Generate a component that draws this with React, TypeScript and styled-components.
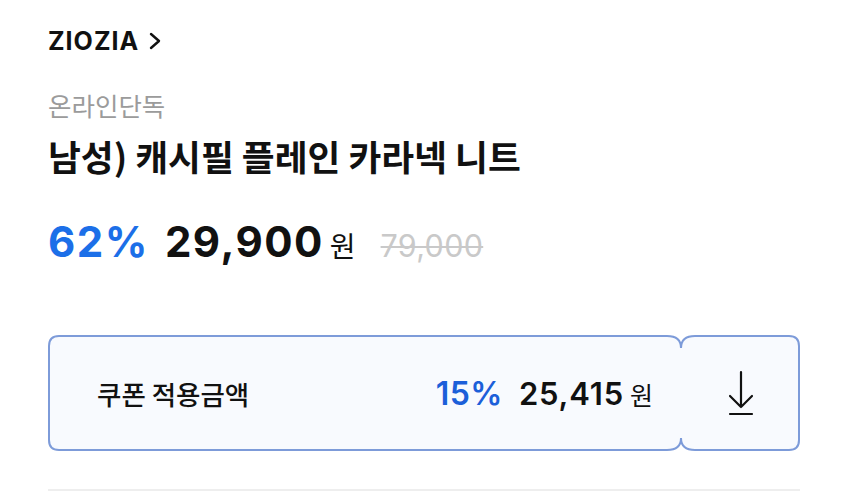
import React from "react";
import styled, { createGlobalStyle } from "styled-components";

const Global = createGlobalStyle`
  html, body { margin: 0; padding: 0; background: #ffffff; }
  body { font-family: "Inter", "Noto Sans CJK KR", sans-serif; color: #111; }
`;

const Page = styled.div`
  width: 849px;
  height: 493px;
  box-sizing: border-box;
  padding: 26px 49px 0 48px;
  display: flex;
  flex-direction: column;
  overflow: hidden;
`;

const BrandRow = styled.div`
  display: flex;
  align-items: center;
  gap: 10px;
  height: 30px;
  font-size: 25px;
  font-weight: 700;
  line-height: 30px;
  color: #111;
  letter-spacing: 1px;
`;

const Tag = styled.div`
  margin-top: 34px;
  height: 30px;
  line-height: 30px;
  font-family: "Noto Sans CJK KR", sans-serif;
  font-size: 25.5px;
  color: #9b9b9b;
`;

const Title = styled.h1`
  margin: 16px 0 0;
  height: 40px;
  line-height: 40px;
  font-family: "Noto Sans CJK KR", sans-serif;
  font-size: 35.7px;
  font-weight: 700;
  color: #111;
`;

const PriceRow = styled.div`
  margin-top: 42px;
  height: 48px;
  line-height: 48px;
  display: flex;
  align-items: baseline;
`;

const Discount = styled.span<{ $size: number }>`
  font-size: ${(p) => p.$size}px;
  font-weight: 700;
  letter-spacing: 1.5px;
  color: #1c6fe8;
`;

const Amount = styled.span<{ $size: number; $weight: number; $spacing: number }>`
  font-size: ${(p) => p.$size}px;
  font-weight: ${(p) => p.$weight};
  letter-spacing: ${(p) => p.$spacing}px;
  color: #111;
`;

const Won = styled.span<{ $size: number }>`
  font-family: "Noto Sans CJK KR", sans-serif;
  font-size: ${(p) => p.$size}px;
  font-weight: 400;
  color: #111;
  margin-left: 6px;
`;

const Original = styled.span`
  margin-left: 25px;
  font-size: 30.5px;
  font-weight: 400;
  letter-spacing: 0.3px;
  color: #c9c9c9;
  text-decoration: line-through;
  text-decoration-thickness: 2px;
`;

const Coupon = styled.div`
  margin-top: 69px;
  position: relative;
  height: 116px;
  display: flex;
`;

const Ticket = styled.svg`
  position: absolute;
  left: 0;
  top: 0;
  width: 752px;
  height: 116px;
  z-index: 0;
`;

const CouponMain = styled.div`
  position: relative;
  z-index: 1;
  flex: 1;
  display: flex;
  align-items: center;
  justify-content: space-between;
  padding: 0 28px 0 49px;
`;

const CouponLabel = styled.span`
  font-family: "Noto Sans CJK KR", sans-serif;
  font-size: 26.5px;
  font-weight: 500;
  color: #111;
`;

const CouponPrice = styled.div`
  display: flex;
  align-items: baseline;
`;

const CouponRate = styled.span`
  font-size: 32px;
  font-weight: 600;
  letter-spacing: 0.5px;
  color: #1c5fd9;
  margin-right: 16px;
`;

const CouponDownload = styled.div`
  position: relative;
  z-index: 1;
  width: 119px;
  display: flex;
  align-items: center;
  justify-content: center;
`;

const Divider = styled.div`
  margin-top: 38px;
  height: 2px;
  background: #eeeeee;
`;

export default function App() {
  return (
    <>
      <Global />
      <Page>
        <BrandRow>
          <span>ZIOZIA</span>
          <svg width="12" height="18" viewBox="0 0 12 18" fill="none">
            <path d="M2 2 L10 9 L2 16" stroke="#111" strokeWidth="2.4" strokeLinecap="round" strokeLinejoin="round" />
          </svg>
        </BrandRow>
        <Tag>온라인단독</Tag>
        <Title>남성) 캐시필 플레인 카라넥 니트</Title>
        <PriceRow>
          <Discount $size={42}>62%</Discount>
          <Amount $size={42} $weight={700} $spacing={1.5} style={{ marginLeft: 16 }}>29,900</Amount>
          <Won $size={28}>원</Won>
          <Original>79,000</Original>
        </PriceRow>
        <Coupon>
          <Ticket viewBox="0 0 752 116">
            <path
              d="M11 1 H619 Q633 1 633 13 Q633 1 647 1 H741 Q751 1 751 11 V105 Q751 115 741 115 H647 Q633 115 633 103 Q633 115 619 115 H11 Q1 115 1 105 V11 Q1 1 11 1 Z"
              fill="#f8fafe"
              stroke="#7d9bd9"
              strokeWidth="2"
            />
          </Ticket>
          <CouponMain>
            <CouponLabel>쿠폰 적용금액</CouponLabel>
            <CouponPrice>
              <CouponRate>15%</CouponRate>
              <Amount $size={31} $weight={600} $spacing={0.8}>25,415</Amount>
              <Won $size={25}>원</Won>
            </CouponPrice>
          </CouponMain>
          <CouponDownload>
            <svg width="26" height="46" viewBox="0 0 26 46" fill="none">
              <path d="M13 2 V37 M2 26 L13 37 L24 26 M2 44 H24" stroke="#111" strokeWidth="2.2" strokeLinecap="round" strokeLinejoin="round" />
            </svg>
          </CouponDownload>
        </Coupon>
        <Divider />
      </Page>
    </>
  );
}
